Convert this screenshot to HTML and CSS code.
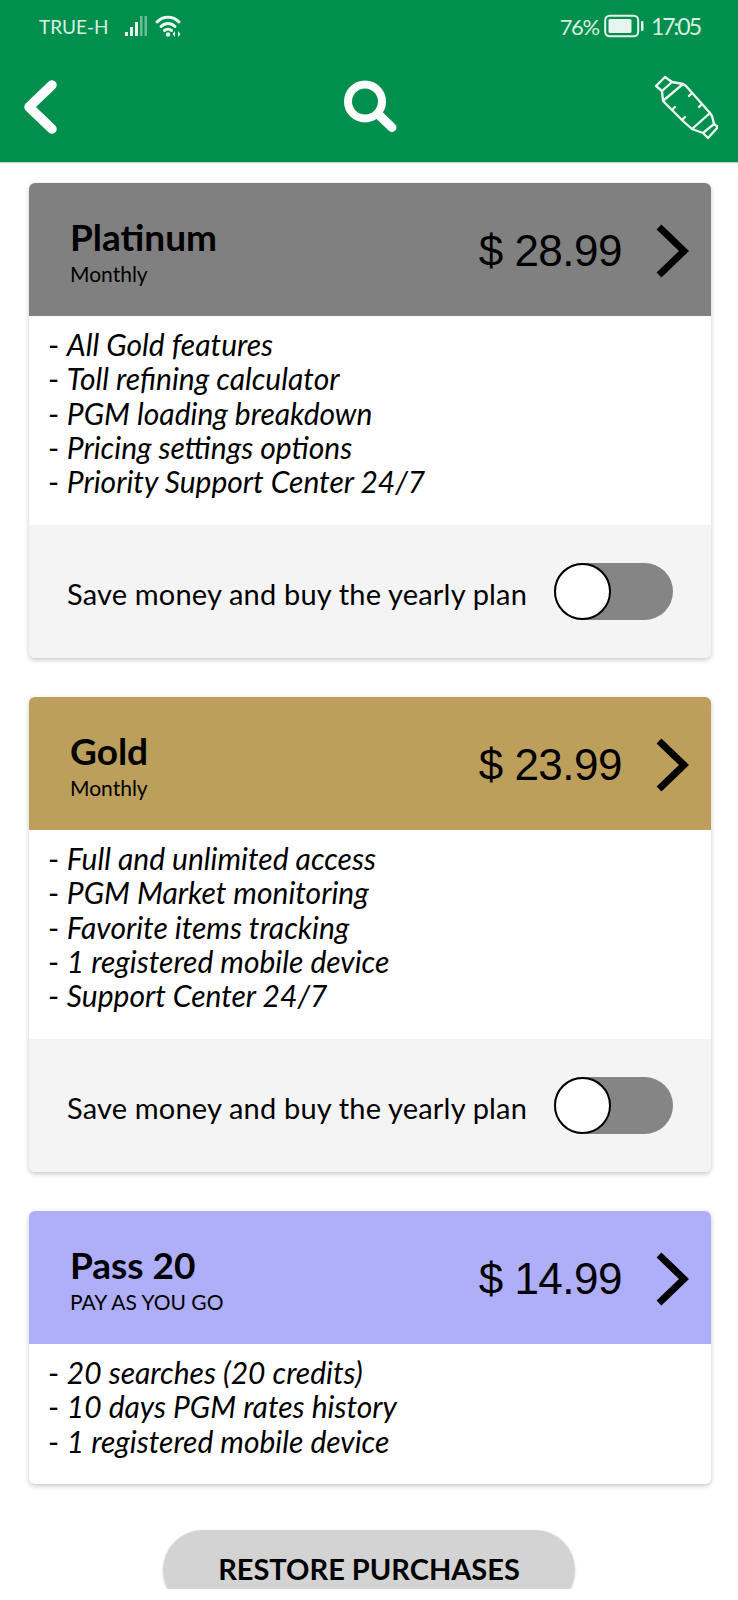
FILE: index.html
```html
<!DOCTYPE html>
<html lang="en">
<head>
<meta charset="utf-8">
<title>Plans</title>
<link rel="stylesheet" href="styles.css">
</head>
<body>
<div class="screen">
  <header class="appbar">
    <div class="status">
      <div class="status-left">
        <span class="carrier">TRUE-H</span>
        <svg class="signal" width="24" height="22" viewBox="0 0 24 22"><rect x="1" y="17" width="3" height="4" fill="#e8f5ee"/><rect x="6" y="12" width="3" height="9" fill="#e8f5ee"/><rect x="11" y="7" width="3" height="14" fill="#e8f5ee"/><rect x="16" y="1" width="2.500" height="20" fill="#6cbd93"/><rect x="20.500" y="1" width="2.500" height="20" fill="#6cbd93"/></svg>
        <svg class="wifi" width="28" height="24" viewBox="0 0 28 24" fill="none" stroke="#e8f5ee" stroke-width="3" stroke-linecap="round"><path d="M2 8 C8 1.500 18 1.500 24 8"/><path d="M6 12.500 C10 8.500 16 8.500 20 12.500"/><path d="M9.500 16.500 C11.500 14.800 14.500 14.800 16.500 16.500"/><circle cx="13" cy="20.500" r="2.200" fill="#e8f5ee" stroke="none"/><path d="M20 17 L17.500 20 L20 23 Z M23 17 L25.500 20 L23 23 Z" fill="#e8f5ee" stroke="none"/></svg>
      </div>
      <div class="status-right">
        <span class="pct">76%</span>
        <svg class="battery" width="40" height="24" viewBox="0 0 40 24"><rect x="1.200" y="1.700" width="33" height="20.600" rx="4.500" fill="none" stroke="#e8f5ee" stroke-width="2"/><rect x="4.500" y="5" width="23" height="14" rx="1.500" fill="#e8f5ee"/><rect x="37" y="7" width="2.500" height="10" rx="1" fill="#e8f5ee"/></svg>
        <span class="time">17:05</span>
      </div>
    </div>
    <nav class="toolbar">
      <svg class="back" width="36" height="56" viewBox="0 0 36 56" fill="none" stroke="#fff" stroke-width="9.500" stroke-linecap="round" stroke-linejoin="round"><path d="M29 6 L6 28 L29 50"/></svg>
      <svg class="search" width="54" height="54" viewBox="0 0 54 54" fill="none" stroke="#fff" stroke-linecap="round"><circle cx="22" cy="21.500" r="17" stroke-width="8"/><path d="M35 34 L49 47.500" stroke-width="9"/></svg>
      <svg class="bottle" width="64" height="64" viewBox="4 9 64 64" fill="none" stroke="#eef8f2" stroke-width="2.300" stroke-linejoin="round" stroke-linecap="round"><path d="M6 20 L15 11 L22 16 L12 25 Z"/><path d="M22 16 L33 18 L36 20 L60 47 L62 50 L64 58 L53 67 L42 63 L33 55 L13 35 L12 25"/><path d="M64 58 L68 61 L58 72 L53 67"/><path d="M33 18 L14 34"/><path d="M60 47 L42 63"/><path d="M42 27 L39 30"/><path d="M52 38 L49 41"/><path d="M22 44 L25 41"/><path d="M32 54 L35 51"/></svg>
    </nav>
  </header>
  <main class="plans">
    <section class="card">
      <div class="plan-head platinum">
        <div class="plan-name"><h2>Platinum</h2><p>Monthly</p></div>
        <div class="plan-price"><span>$ 28.99</span>
          <svg width="34" height="54" viewBox="0 0 34 54" fill="none" stroke="#000" stroke-width="7"><path d="M4 3 L29 27 L4 51"/></svg></div>
      </div>
      <ul class="features">
        <li>- <em>All Gold features</em></li>
        <li>- <em>Toll refining calculator</em></li>
        <li>- <em>PGM loading breakdown</em></li>
        <li>- <em>Pricing settings options</em></li>
        <li>- <em>Priority Support Center 24/7</em></li>
      </ul>
      <div class="yearly"><span>Save money and buy the yearly plan</span><div class="switch"><div class="knob"></div></div></div>
    </section>
    <section class="card">
      <div class="plan-head gold">
        <div class="plan-name"><h2>Gold</h2><p>Monthly</p></div>
        <div class="plan-price"><span>$ 23.99</span>
          <svg width="34" height="54" viewBox="0 0 34 54" fill="none" stroke="#000" stroke-width="7"><path d="M4 3 L29 27 L4 51"/></svg></div>
      </div>
      <ul class="features">
        <li>- <em>Full and unlimited access</em></li>
        <li>- <em>PGM Market monitoring</em></li>
        <li>- <em>Favorite items tracking</em></li>
        <li>- <em>1 registered mobile device</em></li>
        <li>- <em>Support Center 24/7</em></li>
      </ul>
      <div class="yearly"><span>Save money and buy the yearly plan</span><div class="switch"><div class="knob"></div></div></div>
    </section>
    <section class="card">
      <div class="plan-head pass">
        <div class="plan-name"><h2>Pass 20</h2><p>PAY AS YOU GO</p></div>
        <div class="plan-price"><span>$ 14.99</span>
          <svg width="34" height="54" viewBox="0 0 34 54" fill="none" stroke="#000" stroke-width="7"><path d="M4 3 L29 27 L4 51"/></svg></div>
      </div>
      <ul class="features short">
        <li>- <em>20 searches (20 credits)</em></li>
        <li>- <em>10 days PGM rates history</em></li>
        <li>- <em>1 registered mobile device</em></li>
      </ul>
    </section>
    <button class="restore">RESTORE PURCHASES</button>
  </main>
</div>
</body>
</html>
```
FILE: styles.css
```css
* { box-sizing: border-box; }
html, body { margin: 0; background: #fff; }
body { font-family: Lato, "Noto Sans", sans-serif; color: #000; }
.screen { height: 1589px; overflow: hidden; }
.appbar { height: 162px; background: #008f4c; box-shadow: 0 1px 1px rgba(0,90,50,.25); }
.status { height: 52px; padding: 0 38px 0 39px; display: flex; justify-content: space-between; align-items: center; color: #d9efe3; font-size: 20px; }
.status-left, .status-right { display: flex; align-items: center; }
.carrier { font-size: 19px; margin-right: 15px; }
.signal { margin-right: 7px; }
.pct { font-size: 22px; letter-spacing: -1.300px; margin-right: 5px; }
.battery { margin-right: 7px; }
.time { font-size: 23px; letter-spacing: -2px; }
.toolbar { height: 110px; padding: 0 20px 0 23px; display: flex; justify-content: space-between; align-items: center; }
.search { margin-left: 27px; }
.plans { padding: 21px 27px 0 29px; display: flex; flex-direction: column; }
.card { background: #fff; border-radius: 6px; box-shadow: 0 2px 5px rgba(0,0,0,.22); overflow: hidden; margin-bottom: 39px; }
.plan-head { height: 133px; padding: 0 22px 0 41px; display: flex; justify-content: space-between; align-items: center; }
.platinum { background: #808080; }
.gold { background: #bd9f5c; }
.pass { background: #aeaef9; }
.plan-name { margin-top: 8px; }
.plan-name h2 { margin: 0; font-size: 37px; line-height: 40px; font-weight: 700; }
.plan-name p { margin: 0; font-size: 21px; line-height: 34px; }
.plan-price { display: flex; align-items: center; gap: 33px; margin-top: 3px; font-family: "Liberation Sans", sans-serif; font-size: 44px; letter-spacing: -.5px; }
.features { list-style: none; margin: 0; padding: 11px 0 0 19px; height: 209px; font-size: 30px; line-height: 34.300px; }
.features.short { height: 140px; }
.yearly { height: 133px; background: #f4f4f4; padding: 0 38px 0 38px; display: flex; justify-content: space-between; align-items: center; font-size: 29px; letter-spacing: .18px; }
.yearly span { margin-top: 4px; }
.switch { width: 119px; height: 57px; border-radius: 29px; background: #858585; }
.knob { width: 57px; height: 57px; border-radius: 50%; background: #fff; border: 2px solid #000; }
.restore { align-self: center; margin: 7px 0 0 -2px; width: 412px; height: 80px; padding: 0 0 3px 0; border: 0; border-radius: 40px; background: #d3d3d3; box-shadow: 0 1px 3px rgba(0,0,0,.15); font-family: Lato, "Noto Sans", sans-serif; font-weight: 700; font-size: 29px; color: #000; }
```
